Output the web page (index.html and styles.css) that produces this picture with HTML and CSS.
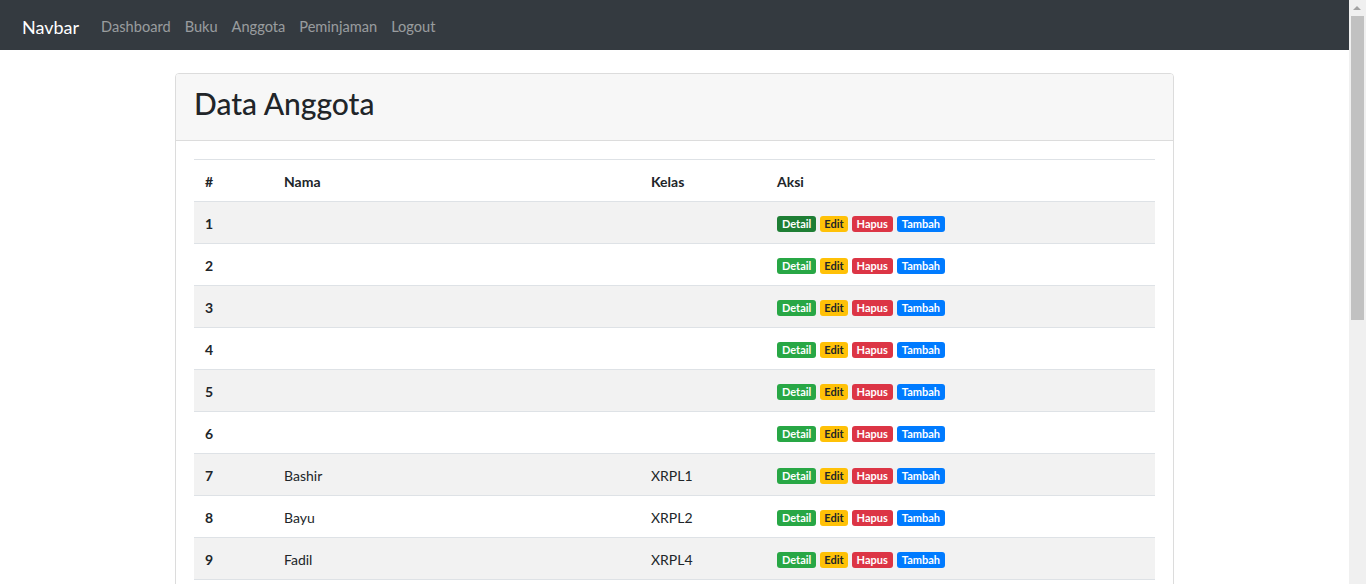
FILE: index.html
```html
<!DOCTYPE html>
<html lang="id">
<head>
<meta charset="utf-8">
<title>Data Anggota</title>
<link rel="stylesheet" href="styles.css">
</head>
<body>
<nav class="navbar">
  <a class="brand" href="#">Navbar</a>
  <ul class="nav-links">
    <li><a href="#">Dashboard</a></li>
    <li><a href="#">Buku</a></li>
    <li><a href="#">Anggota</a></li>
    <li><a href="#">Peminjaman</a></li>
    <li><a href="#">Logout</a></li>
  </ul>
</nav>
<main class="container">
  <section class="card">
    <header class="card-header"><h1>Data Anggota</h1></header>
    <div class="card-body">
      <table class="table">
        <colgroup>
          <col class="c-no"><col class="c-nama"><col class="c-kelas"><col>
        </colgroup>
        <thead>
          <tr><th>#</th><th>Nama</th><th>Kelas</th><th>Aksi</th></tr>
        </thead>
        <tbody>
          <tr><th>1</th><td></td><td></td><td><div class="actions"><a class="badge badge-success active" href="#">Detail</a><a class="badge badge-warning" href="#">Edit</a><a class="badge badge-danger" href="#">Hapus</a><a class="badge badge-primary" href="#">Tambah</a></div></td></tr>
          <tr><th>2</th><td></td><td></td><td><div class="actions"><a class="badge badge-success" href="#">Detail</a><a class="badge badge-warning" href="#">Edit</a><a class="badge badge-danger" href="#">Hapus</a><a class="badge badge-primary" href="#">Tambah</a></div></td></tr>
          <tr><th>3</th><td></td><td></td><td><div class="actions"><a class="badge badge-success" href="#">Detail</a><a class="badge badge-warning" href="#">Edit</a><a class="badge badge-danger" href="#">Hapus</a><a class="badge badge-primary" href="#">Tambah</a></div></td></tr>
          <tr><th>4</th><td></td><td></td><td><div class="actions"><a class="badge badge-success" href="#">Detail</a><a class="badge badge-warning" href="#">Edit</a><a class="badge badge-danger" href="#">Hapus</a><a class="badge badge-primary" href="#">Tambah</a></div></td></tr>
          <tr><th>5</th><td></td><td></td><td><div class="actions"><a class="badge badge-success" href="#">Detail</a><a class="badge badge-warning" href="#">Edit</a><a class="badge badge-danger" href="#">Hapus</a><a class="badge badge-primary" href="#">Tambah</a></div></td></tr>
          <tr><th>6</th><td></td><td></td><td><div class="actions"><a class="badge badge-success" href="#">Detail</a><a class="badge badge-warning" href="#">Edit</a><a class="badge badge-danger" href="#">Hapus</a><a class="badge badge-primary" href="#">Tambah</a></div></td></tr>
          <tr><th>7</th><td>Bashir</td><td>XRPL1</td><td><div class="actions"><a class="badge badge-success" href="#">Detail</a><a class="badge badge-warning" href="#">Edit</a><a class="badge badge-danger" href="#">Hapus</a><a class="badge badge-primary" href="#">Tambah</a></div></td></tr>
          <tr><th>8</th><td>Bayu</td><td>XRPL2</td><td><div class="actions"><a class="badge badge-success" href="#">Detail</a><a class="badge badge-warning" href="#">Edit</a><a class="badge badge-danger" href="#">Hapus</a><a class="badge badge-primary" href="#">Tambah</a></div></td></tr>
          <tr><th>9</th><td>Fadil</td><td>XRPL4</td><td><div class="actions"><a class="badge badge-success" href="#">Detail</a><a class="badge badge-warning" href="#">Edit</a><a class="badge badge-danger" href="#">Hapus</a><a class="badge badge-primary" href="#">Tambah</a></div></td></tr>
        </tbody>
      </table>
    </div>
  </section>
</main>
<div class="scrollbar" aria-hidden="true">
  <span class="scroll-arrow"></span>
  <span class="scroll-thumb"></span>
</div>
</body>
</html>
```
FILE: styles.css
```css
* { box-sizing: border-box; }
html, body { margin: 0; padding: 0; }
body {
  font-family: Lato, "Open Sans", "Liberation Sans", sans-serif;
  font-size: 14px;
  color: #212529;
  background: #fff;
  padding-right: 17px;
}
a { text-decoration: none; }

.navbar {
  height: 50px;
  background: #343a40;
  display: flex;
  align-items: center;
  padding: 3px 22px 0;
}
.brand {
  color: #fff;
  font-size: 18px;
  line-height: 30px;
  margin-right: 15px;
}
.nav-links {
  display: flex;
  list-style: none;
  margin: 0;
  padding: 0;
}
.nav-links a {
  display: block;
  color: rgba(255,255,255,.5);
  font-size: 14.6px;
  line-height: 24px;
  padding: 0 7px;
}

.container {
  width: 999px;
  margin: 23px auto 380px;
}
.card {
  border: 1px solid #dcdcdc;
  border-radius: 4px;
  background: #fff;
}
.card-header {
  background: #f7f7f7;
  border-bottom: 1px solid #dcdcdc;
  border-radius: 3px 3px 0 0;
  height: 67px;
  padding: 0 18px;
  display: flex;
  align-items: center;
}
.card-header h1 {
  margin: 0;
  font-size: 30px;
  font-weight: 500;
  line-height: 38px;
  padding-bottom: 8px;
}
.card-body { padding: 18px; }

.table {
  width: 100%;
  border-collapse: collapse;
}
.c-no { width: 79px; }
.c-nama { width: 367px; }
.c-kelas { width: 126px; }
.table th, .table td {
  text-align: left;
  padding: 11px 11px 9px;
  line-height: 21px;
  height: 42px;
  border-top: 1px solid #dee2e6;
  vertical-align: middle;
}
.table th { font-weight: 700; }
.table tbody tr:nth-child(odd) { background: #f2f2f2; }
.table tbody tr:last-child th, .table tbody tr:last-child td { border-bottom: 1px solid #dee2e6; }

.actions { display: flex; gap: 4px; }
.badge {
  display: inline-block;
  font-size: 11px;
  font-weight: 700;
  line-height: 11px;
  padding: 2px 5px 3px;
  border-radius: 3px;
  color: #fff;
}
.badge-success { background: #28a745; }
.badge-success.active { background: #1e7e34; }
.badge-warning { background: #ffc107; color: #212529; padding: 2px 4px 3px; }
.badge-danger { background: #dc3545; }
.badge-primary { background: #007bff; }

.scrollbar {
  position: fixed;
  top: 0;
  right: 0;
  width: 17px;
  height: 100%;
  background: #f0f0f0;
}
.scroll-arrow {
  position: absolute;
  top: 6px;
  left: 4px;
  width: 0;
  height: 0;
  border-left: 4px solid transparent;
  border-right: 4px solid transparent;
  border-bottom: 4px solid #a3a3a3;
}
.scroll-thumb {
  position: absolute;
  top: 16px;
  left: 2px;
  width: 13px;
  height: 304px;
  background: #c1c1c1;
}
```
